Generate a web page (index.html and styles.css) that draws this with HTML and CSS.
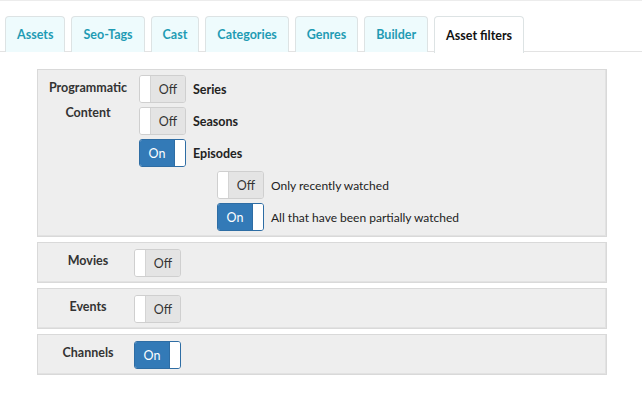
FILE: index.html
```html
<!DOCTYPE html>
<html>
<head>
<meta charset="utf-8">
<link rel="stylesheet" href="styles.css">
</head>
<body>
<div class="page">
  <ul class="tabs">
    <li class="tab">Assets</li>
    <li class="tab">Seo-Tags</li>
    <li class="tab">Cast</li>
    <li class="tab">Categories</li>
    <li class="tab">Genres</li>
    <li class="tab">Builder</li>
    <li class="tab active">Asset filters</li>
  </ul>
  <div class="content">
    <div class="panel panel-main">
      <div class="label">Programmatic<br>Content</div>
      <div class="options">
        <div class="row">
          <span class="toggle off"><span class="knob"></span><span class="state">Off</span></span>
          <span class="opt bold">Series</span>
        </div>
        <div class="row">
          <span class="toggle off"><span class="knob"></span><span class="state">Off</span></span>
          <span class="opt bold">Seasons</span>
        </div>
        <div class="row">
          <span class="toggle on"><span class="state">On</span><span class="knob"></span></span>
          <span class="opt bold">Episodes</span>
        </div>
        <div class="row sub">
          <span class="toggle off"><span class="knob"></span><span class="state">Off</span></span>
          <span class="opt">Only recently watched</span>
        </div>
        <div class="row sub">
          <span class="toggle on"><span class="state">On</span><span class="knob"></span></span>
          <span class="opt">All that have been partially watched</span>
        </div>
      </div>
    </div>
    <div class="panel">
      <div class="label">Movies</div>
      <div class="options narrow">
        <span class="toggle off"><span class="knob"></span><span class="state">Off</span></span>
      </div>
    </div>
    <div class="panel">
      <div class="label">Events</div>
      <div class="options narrow">
        <span class="toggle off"><span class="knob"></span><span class="state">Off</span></span>
      </div>
    </div>
    <div class="panel">
      <div class="label">Channels</div>
      <div class="options narrow">
        <span class="toggle on"><span class="state">On</span><span class="knob"></span></span>
      </div>
    </div>
  </div>
</div>
</body>
</html>
```
FILE: styles.css
```css
* { box-sizing: border-box; }
html, body { margin: 0; padding: 0; background: #fff; }
body {
  font-family: Lato, "Open Sans", sans-serif;
  color: #333;
  font-size: 12px;
  border-top: 1px solid #ececec;
}
.page { padding-top: 15px; }
.tabs {
  list-style: none;
  margin: 0;
  padding: 0 0 0 5px;
  display: flex;
  border-bottom: 1px solid #e3e3e3;
  height: 36px;
}
.tab {
  height: 36px;
  padding: 0 11px;
  margin-right: 6px;
  display: flex;
  align-items: center;
  font-weight: bold;
  font-size: 12.5px;
  color: #1f9bb4;
  background: #eefbfd;
  border: 1px solid #dde3e4;
  border-bottom: none;
  border-radius: 4px 4px 0 0;
}
.tab.active {
  background: #fff;
  color: #111;
  height: 37px;
}
.content {
  padding: 17px 0 0 37px;
  width: 607px;
  display: flex;
  flex-direction: column;
  gap: 5px;
}
.panel {
  background: #eeeeee;
  border: 1px solid #d9d9d9;
  box-shadow: inset -1px -1px 0 #e2e2e2;
  display: flex;
  padding: 5px 0;
  height: 41px;
}
.panel-main { height: auto; }
.label {
  width: 100px;
  flex: none;
  text-align: center;
  font-weight: bold;
  font-size: 12.5px;
  line-height: 25px;
  padding-top: 0;
}
.options {
  display: flex;
  flex-direction: column;
  gap: 4px;
  padding-left: 1px;
}
.options.narrow { padding-left: 0; margin-left: -4px; margin-top: 1px; }
.row {
  display: flex;
  align-items: center;
  gap: 7px;
}
.row.sub { padding-left: 78px; }
.opt { font-size: 12px; color: #222; }
.opt.bold { font-weight: bold; font-size: 12.5px; }
.toggle {
  width: 47px;
  height: 28px;
  display: flex;
  border: 1px solid #cfcfcf;
  border-radius: 3px;
  overflow: hidden;
  font-size: 12.5px;
  flex: none;
}
.toggle .knob {
  width: 11px;
  background: #fff;
  flex: none;
}
.toggle .state {
  flex: 1;
  display: flex;
  align-items: center;
  justify-content: center;
}
.toggle.off .state { background: #e4e4e4; color: #333; }
.toggle.off .knob { border-right: 1px solid #d4d4d4; }
.toggle.on { border-color: #2e6da4; }
.toggle.on .state { background: #337ab7; color: #fff; }
.toggle.on .knob { border-left: 1px solid #2e6da4; }
```
